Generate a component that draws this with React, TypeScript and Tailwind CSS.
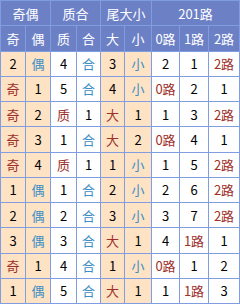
const rows: string[][] = [
  ['2', '偶', '4', '合', '3', '小', '2', '1', '2路'],
  ['奇', '1', '5', '合', '4', '小', '0路', '2', '1'],
  ['奇', '2', '质', '1', '大', '1', '1', '3', '2路'],
  ['奇', '3', '1', '合', '大', '2', '0路', '4', '1'],
  ['奇', '4', '质', '1', '1', '小', '1', '5', '2路'],
  ['1', '偶', '1', '合', '2', '小', '2', '6', '2路'],
  ['2', '偶', '2', '合', '3', '小', '3', '7', '2路'],
  ['3', '偶', '3', '合', '大', '1', '4', '1路', '1'],
  ['奇', '1', '4', '合', '1', '小', '0路', '1', '2'],
  ['1', '偶', '5', '合', '大', '1', '1', '1路', '3'],
];

const peachCols = [0, 1, 4, 5];

function textColor(v: string) {
  if (v === '偶' || v === '合' || v === '小') return 'text-[#3c8ec4]';
  if (v === '奇' || v === '质' || v === '大' || v.endsWith('路')) return 'text-[#9e2f2a]';
  return 'text-black';
}

export default function App() {
  return (
    <div
      className="grid w-[240px] h-[304px] gap-px p-px bg-[#7f9de0] grid-cols-[24px_24px_25px_23px_23px_26px_27px_28px_30px] grid-rows-[repeat(12,minmax(0,1fr))] text-[13px] leading-none"
      style={{ fontFamily: '"Noto Sans CJK SC", "DejaVu Sans", sans-serif' }}
    >
      <div className="col-span-2 flex items-center justify-center bg-[#6c80c6] text-white">奇偶</div>
      <div className="col-span-2 flex items-center justify-center bg-[#6c80c6] text-white">质合</div>
      <div className="col-span-2 flex items-center justify-center bg-[#6c80c6] text-white">尾大小</div>
      <div className="col-span-3 flex items-center justify-center bg-[#6c80c6] text-white">201路</div>

      {['奇', '偶', '质', '合', '大', '小', '0路', '1路', '2路'].map((h) => (
        <div key={h} className="flex items-center justify-center bg-[#6c80c6] text-white">
          {h}
        </div>
      ))}

      {rows.map((r, i) =>
        r.map((v, j) => (
          <div
            key={i + '-' + j}
            className={`flex items-center justify-center ${
              peachCols.includes(j) ? 'bg-[#fde2c4]' : 'bg-white'
            } ${textColor(v)}`}
          >
            {v}
          </div>
        ))
      )}
    </div>
  );
}
